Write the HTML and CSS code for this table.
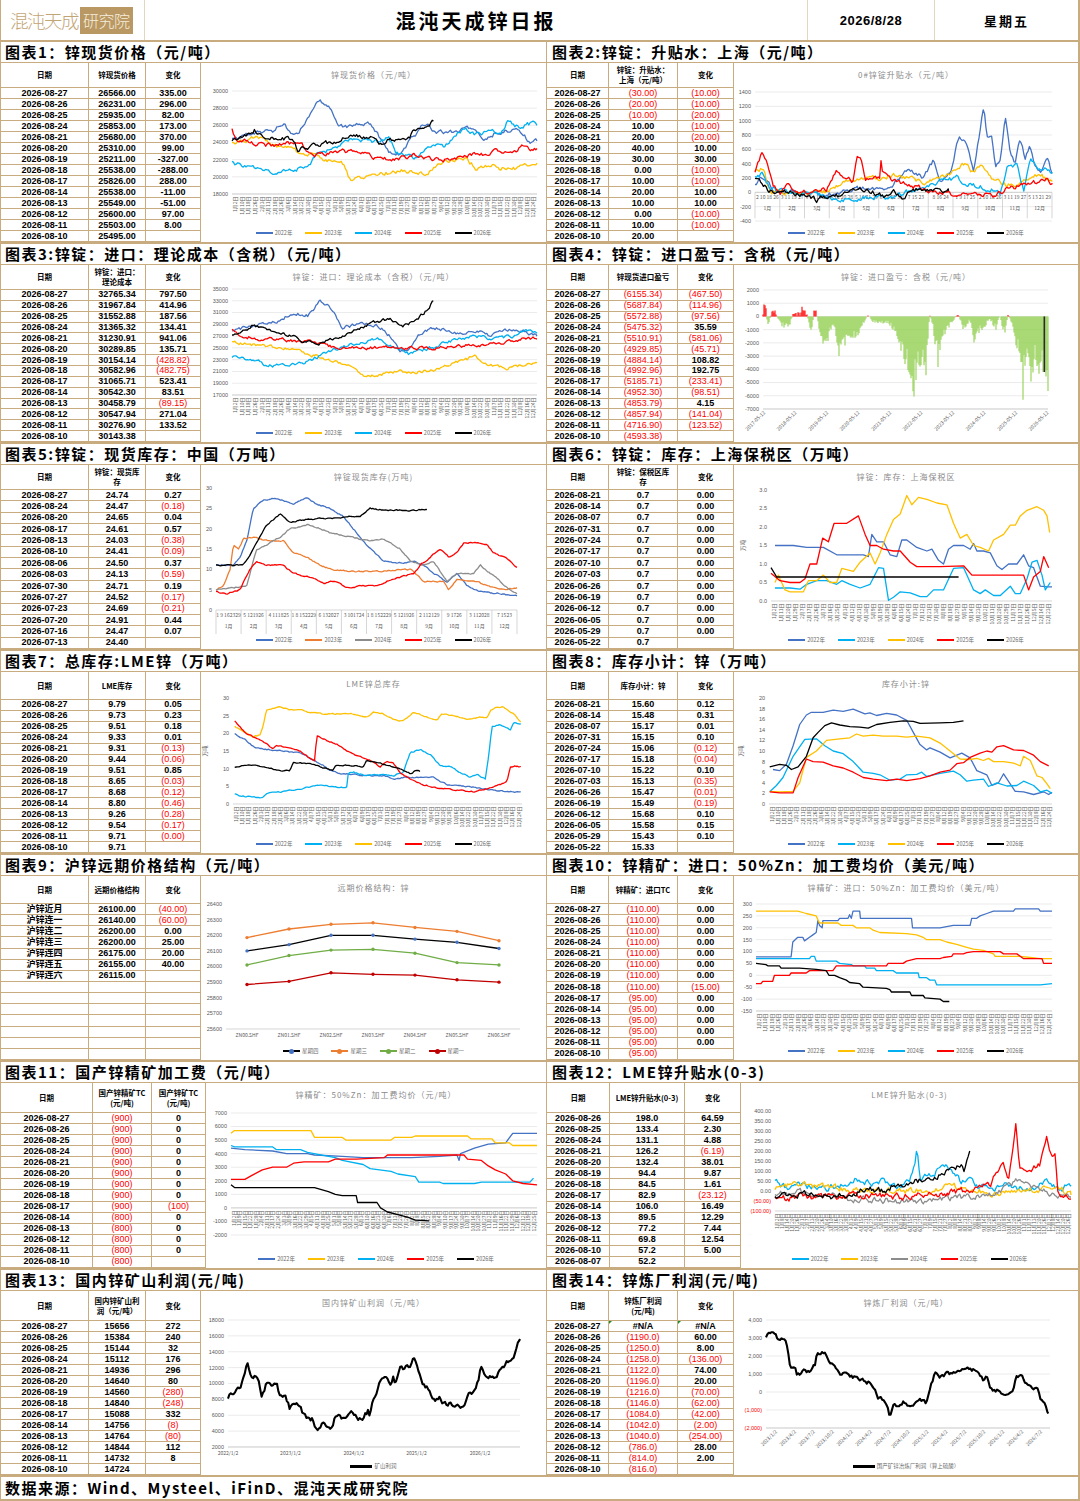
FILE: index.html
```html
<!DOCTYPE html>
<html lang="zh-CN">
<head>
<meta charset="utf-8">
<title>混沌天成锌日报</title>
<link rel="stylesheet" href="styles.css">
</head>
<body>
<div class="page">
  <header class="hdr">
    <div class="logo"><span class="lg-a">混沌天成</span><span class="lg-b">研究院</span></div>
    <div class="htitle">混沌天成锌日报</div>
    <div class="hdate">2026/8/28</div>
    <div class="hday">星期五</div>
  </header>

  <section class="sec s1">
    <div class="panel">
      <h2 class="ttl">图表1：锌现货价格（元/吨）</h2>
      <div class="body">
        <div class="tbl">
          <span class="h">日期</span><span class="h">锌现货价格</span><span class="h">变化</span>
          <span>2026-08-27</span><span>26566.00</span><span>335.00</span>
          <span>2026-08-26</span><span>26231.00</span><span>296.00</span>
          <span>2026-08-25</span><span>25935.00</span><span>82.00</span>
          <span>2026-08-24</span><span>25853.00</span><span>173.00</span>
          <span>2026-08-21</span><span>25680.00</span><span>370.00</span>
          <span>2026-08-20</span><span>25310.00</span><span>99.00</span>
          <span>2026-08-19</span><span>25211.00</span><span>-327.00</span>
          <span>2026-08-18</span><span>25538.00</span><span>-288.00</span>
          <span>2026-08-17</span><span>25826.00</span><span>288.00</span>
          <span>2026-08-14</span><span>25538.00</span><span>-11.00</span>
          <span>2026-08-13</span><span>25549.00</span><span>-51.00</span>
          <span>2026-08-12</span><span>25600.00</span><span>97.00</span>
          <span>2026-08-11</span><span>25503.00</span><span>8.00</span>
          <span>2026-08-10</span><span>25495.00</span><span></span>
        </div>
        <div class="chart" data-c="c1">
          <div class="ctitle">锌现货价格（元/吨）</div>
          <svg class="plot"></svg>
          <div class="legend"><span class="li"><i class="sw blue"></i>2022年</span><span class="li"><i class="sw gold"></i>2023年</span><span class="li"><i class="sw cyan"></i>2024年</span><span class="li"><i class="sw red"></i>2025年</span><span class="li"><i class="sw black"></i>2026年</span></div>
        </div>
      </div>
    </div>
    <div class="panel rp">
      <h2 class="ttl">图表2:锌锭：升贴水：上海（元/吨）</h2>
      <div class="body">
        <div class="tbl">
          <span class="h">日期</span><span class="h">锌锭：升贴水：<br>上海（元/吨）</span><span class="h">变化</span>
          <span>2026-08-27</span><span class="r">(30.00)</span><span class="r">(10.00)</span>
          <span>2026-08-26</span><span class="r">(20.00)</span><span class="r">(10.00)</span>
          <span>2026-08-25</span><span class="r">(10.00)</span><span class="r">(20.00)</span>
          <span>2026-08-24</span><span>10.00</span><span class="r">(10.00)</span>
          <span>2026-08-21</span><span>20.00</span><span class="r">(20.00)</span>
          <span>2026-08-20</span><span>40.00</span><span>10.00</span>
          <span>2026-08-19</span><span>30.00</span><span>30.00</span>
          <span>2026-08-18</span><span>0.00</span><span class="r">(10.00)</span>
          <span>2026-08-17</span><span>10.00</span><span class="r">(10.00)</span>
          <span>2026-08-14</span><span>20.00</span><span>10.00</span>
          <span>2026-08-13</span><span>10.00</span><span>10.00</span>
          <span>2026-08-12</span><span>0.00</span><span class="r">(10.00)</span>
          <span>2026-08-11</span><span>10.00</span><span class="r">(10.00)</span>
          <span>2026-08-10</span><span>20.00</span><span></span>
        </div>
        <div class="chart" data-c="c2">
          <div class="ctitle">0#锌锭升贴水（元/吨）</div>
          <svg class="plot"></svg>
          <div class="legend"><span class="li"><i class="sw blue"></i>2022年</span><span class="li"><i class="sw gold"></i>2023年</span><span class="li"><i class="sw cyan"></i>2024年</span><span class="li"><i class="sw red"></i>2025年</span><span class="li"><i class="sw black"></i>2026年</span></div>
        </div>
      </div>
    </div>
  </section>

  <section class="sec s2">
    <div class="panel">
      <h2 class="ttl">图表3:锌锭：进口：理论成本（含税）（元/吨）</h2>
      <div class="body">
        <div class="tbl">
          <span class="h">日期</span><span class="h">锌锭：进口：<br>理论成本</span><span class="h">变化</span>
          <span>2026-08-27</span><span>32765.34</span><span>797.50</span>
          <span>2026-08-26</span><span>31967.84</span><span>414.96</span>
          <span>2026-08-25</span><span>31552.88</span><span>187.56</span>
          <span>2026-08-24</span><span>31365.32</span><span>134.41</span>
          <span>2026-08-21</span><span>31230.91</span><span>941.06</span>
          <span>2026-08-20</span><span>30289.85</span><span>135.71</span>
          <span>2026-08-19</span><span>30154.14</span><span class="r">(428.82)</span>
          <span>2026-08-18</span><span>30582.96</span><span class="r">(482.75)</span>
          <span>2026-08-17</span><span>31065.71</span><span>523.41</span>
          <span>2026-08-14</span><span>30542.30</span><span>83.51</span>
          <span>2026-08-13</span><span>30458.79</span><span class="r">(89.15)</span>
          <span>2026-08-12</span><span>30547.94</span><span>271.04</span>
          <span>2026-08-11</span><span>30276.90</span><span>133.52</span>
          <span>2026-08-10</span><span>30143.38</span><span></span>
        </div>
        <div class="chart" data-c="c3">
          <div class="ctitle">锌锭：进口：理论成本（含税）（元/吨）</div>
          <svg class="plot"></svg>
          <div class="legend"><span class="li"><i class="sw blue"></i>2022年</span><span class="li"><i class="sw gold"></i>2023年</span><span class="li"><i class="sw cyan"></i>2024年</span><span class="li"><i class="sw red"></i>2025年</span><span class="li"><i class="sw black"></i>2026年</span></div>
        </div>
      </div>
    </div>
    <div class="panel rp">
      <h2 class="ttl">图表4：锌锭：进口盈亏：含税（元/吨）</h2>
      <div class="body">
        <div class="tbl">
          <span class="h">日期</span><span class="h">锌现货进口盈亏</span><span class="h">变化</span>
          <span>2026-08-27</span><span class="r">(6155.34)</span><span class="r">(467.50)</span>
          <span>2026-08-26</span><span class="r">(5687.84)</span><span class="r">(114.96)</span>
          <span>2026-08-25</span><span class="r">(5572.88)</span><span class="r">(97.56)</span>
          <span>2026-08-24</span><span class="r">(5475.32)</span><span>35.59</span>
          <span>2026-08-21</span><span class="r">(5510.91)</span><span class="r">(581.06)</span>
          <span>2026-08-20</span><span class="r">(4929.85)</span><span class="r">(45.71)</span>
          <span>2026-08-19</span><span class="r">(4884.14)</span><span>108.82</span>
          <span>2026-08-18</span><span class="r">(4992.96)</span><span>192.75</span>
          <span>2026-08-17</span><span class="r">(5185.71)</span><span class="r">(233.41)</span>
          <span>2026-08-14</span><span class="r">(4952.30)</span><span class="r">(98.51)</span>
          <span>2026-08-13</span><span class="r">(4853.79)</span><span>4.15</span>
          <span>2026-08-12</span><span class="r">(4857.94)</span><span class="r">(141.04)</span>
          <span>2026-08-11</span><span class="r">(4716.90)</span><span class="r">(123.52)</span>
          <span>2026-08-10</span><span class="r">(4593.38)</span><span></span>
        </div>
        <div class="chart nolg" data-c="c4">
          <div class="ctitle">锌锭：进口盈亏：含税（元/吨）</div>
          <svg class="plot"></svg>
        </div>
      </div>
    </div>
  </section>

  <section class="sec s3">
    <div class="panel">
      <h2 class="ttl">图表5:锌锭：现货库存：中国（万吨）</h2>
      <div class="body">
        <div class="tbl">
          <span class="h">日期</span><span class="h">锌锭：现货库<br>存</span><span class="h">变化</span>
          <span>2026-08-27</span><span>24.74</span><span>0.27</span>
          <span>2026-08-24</span><span>24.47</span><span class="r">(0.18)</span>
          <span>2026-08-20</span><span>24.65</span><span>0.04</span>
          <span>2026-08-17</span><span>24.61</span><span>0.57</span>
          <span>2026-08-13</span><span>24.03</span><span class="r">(0.38)</span>
          <span>2026-08-10</span><span>24.41</span><span class="r">(0.09)</span>
          <span>2026-08-06</span><span>24.50</span><span>0.37</span>
          <span>2026-08-03</span><span>24.13</span><span class="r">(0.59)</span>
          <span>2026-07-30</span><span>24.71</span><span>0.19</span>
          <span>2026-07-27</span><span>24.52</span><span class="r">(0.17)</span>
          <span>2026-07-23</span><span>24.69</span><span class="r">(0.21)</span>
          <span>2026-07-20</span><span>24.91</span><span>0.44</span>
          <span>2026-07-16</span><span>24.47</span><span>0.07</span>
          <span>2026-07-13</span><span>24.40</span><span></span>
        </div>
        <div class="chart" data-c="c5">
          <div class="ctitle">锌锭现货库存(万吨)</div>
          <svg class="plot"></svg>
          <div class="legend"><span class="li"><i class="sw blue"></i>2022年</span><span class="li"><i class="sw orange"></i>2023年</span><span class="li"><i class="sw gray"></i>2024年</span><span class="li"><i class="sw red"></i>2025年</span><span class="li"><i class="sw black"></i>2026年</span></div>
        </div>
      </div>
    </div>
    <div class="panel rp">
      <h2 class="ttl">图表6：锌锭：库存：上海保税区（万吨）</h2>
      <div class="body">
        <div class="tbl">
          <span class="h">日期</span><span class="h">锌锭：保税区库<br>存</span><span class="h">变化</span>
          <span>2026-08-21</span><span>0.7</span><span>0.00</span>
          <span>2026-08-14</span><span>0.7</span><span>0.00</span>
          <span>2026-08-07</span><span>0.7</span><span>0.00</span>
          <span>2026-07-31</span><span>0.7</span><span>0.00</span>
          <span>2026-07-24</span><span>0.7</span><span>0.00</span>
          <span>2026-07-17</span><span>0.7</span><span>0.00</span>
          <span>2026-07-10</span><span>0.7</span><span>0.00</span>
          <span>2026-07-03</span><span>0.7</span><span>0.00</span>
          <span>2026-06-26</span><span>0.7</span><span>0.00</span>
          <span>2026-06-19</span><span>0.7</span><span>0.00</span>
          <span>2026-06-12</span><span>0.7</span><span>0.00</span>
          <span>2026-06-05</span><span>0.7</span><span>0.00</span>
          <span>2026-05-29</span><span>0.7</span><span>0.00</span>
          <span>2026-05-22</span><span>0.7</span><span></span>
        </div>
        <div class="chart" data-c="c6">
          <div class="ctitle">锌锭：库存：上海保税区</div>
          <svg class="plot"></svg>
          <div class="legend"><span class="li"><i class="sw blue"></i>2022年</span><span class="li"><i class="sw cyan"></i>2023年</span><span class="li"><i class="sw gold"></i>2024年</span><span class="li"><i class="sw red"></i>2025年</span><span class="li"><i class="sw black"></i>2026年</span></div>
        </div>
      </div>
    </div>
  </section>

  <section class="sec s4">
    <div class="panel">
      <h2 class="ttl">图表7：总库存:LME锌（万吨）</h2>
      <div class="body">
        <div class="tbl">
          <span class="h">日期</span><span class="h">LME库存</span><span class="h">变化</span>
          <span>2026-08-27</span><span>9.79</span><span>0.05</span>
          <span>2026-08-26</span><span>9.73</span><span>0.23</span>
          <span>2026-08-25</span><span>9.51</span><span>0.18</span>
          <span>2026-08-24</span><span>9.33</span><span>0.01</span>
          <span>2026-08-21</span><span>9.31</span><span class="r">(0.13)</span>
          <span>2026-08-20</span><span>9.44</span><span class="r">(0.06)</span>
          <span>2026-08-19</span><span>9.51</span><span>0.85</span>
          <span>2026-08-18</span><span>8.65</span><span class="r">(0.03)</span>
          <span>2026-08-17</span><span>8.68</span><span class="r">(0.12)</span>
          <span>2026-08-14</span><span>8.80</span><span class="r">(0.46)</span>
          <span>2026-08-13</span><span>9.26</span><span class="r">(0.28)</span>
          <span>2026-08-12</span><span>9.54</span><span class="r">(0.17)</span>
          <span>2026-08-11</span><span>9.71</span><span class="r">(0.00)</span>
          <span>2026-08-10</span><span>9.71</span><span></span>
        </div>
        <div class="chart" data-c="c7">
          <div class="ctitle">LME锌总库存</div>
          <svg class="plot"></svg>
          <div class="legend"><span class="li"><i class="sw blue"></i>2022年</span><span class="li"><i class="sw cyan"></i>2023年</span><span class="li"><i class="sw gold"></i>2024年</span><span class="li"><i class="sw red"></i>2025年</span><span class="li"><i class="sw black"></i>2026年</span></div>
        </div>
      </div>
    </div>
    <div class="panel rp">
      <h2 class="ttl">图表8：库存小计：锌（万吨）</h2>
      <div class="body">
        <div class="tbl">
          <span class="h">日期</span><span class="h">库存小计：锌</span><span class="h">变化</span>
          <span>2026-08-21</span><span>15.60</span><span>0.12</span>
          <span>2026-08-14</span><span>15.48</span><span>0.31</span>
          <span>2026-08-07</span><span>15.17</span><span>0.01</span>
          <span>2026-07-31</span><span>15.15</span><span>0.10</span>
          <span>2026-07-24</span><span>15.06</span><span class="r">(0.12)</span>
          <span>2026-07-17</span><span>15.18</span><span class="r">(0.04)</span>
          <span>2026-07-10</span><span>15.22</span><span>0.10</span>
          <span>2026-07-03</span><span>15.13</span><span class="r">(0.35)</span>
          <span>2026-06-26</span><span>15.47</span><span class="r">(0.01)</span>
          <span>2026-06-19</span><span>15.49</span><span class="r">(0.19)</span>
          <span>2026-06-12</span><span>15.68</span><span>0.10</span>
          <span>2026-06-05</span><span>15.58</span><span>0.15</span>
          <span>2026-05-29</span><span>15.43</span><span>0.10</span>
          <span>2026-05-22</span><span>15.33</span><span></span>
        </div>
        <div class="chart" data-c="c8">
          <div class="ctitle">库存小计:锌</div>
          <svg class="plot"></svg>
          <div class="legend"><span class="li"><i class="sw blue"></i>2022年</span><span class="li"><i class="sw cyan"></i>2023年</span><span class="li"><i class="sw gold"></i>2024年</span><span class="li"><i class="sw red"></i>2025年</span><span class="li"><i class="sw black"></i>2026年</span></div>
        </div>
      </div>
    </div>
  </section>

  <section class="sec s5">
    <div class="panel">
      <h2 class="ttl">图表9：沪锌远期价格结构（元/吨）</h2>
      <div class="body">
        <div class="tbl">
          <span class="h">日期</span><span class="h">远期价格结构</span><span class="h">变化</span>
          <span>沪锌近月</span><span>26100.00</span><span class="r">(40.00)</span>
          <span>沪锌连一</span><span>26140.00</span><span class="r">(60.00)</span>
          <span>沪锌连二</span><span>26200.00</span><span>0.00</span>
          <span>沪锌连三</span><span>26200.00</span><span>25.00</span>
          <span>沪锌连四</span><span>26175.00</span><span>20.00</span>
          <span>沪锌连五</span><span>26155.00</span><span>40.00</span>
          <span>沪锌连六</span><span>26115.00</span><span></span>
          <span></span><span></span><span></span>
          <span></span><span></span><span></span>
          <span></span><span></span><span></span>
          <span></span><span></span><span></span>
          <span></span><span></span><span></span>
          <span></span><span></span><span></span>
          <span></span><span></span><span></span>
        </div>
        <div class="chart" data-c="c9">
          <div class="ctitle">远期价格结构：锌</div>
          <svg class="plot"></svg>
          <div class="legend"><span class="li"><i class="sw black mk m-blue"></i>星期四</span><span class="li"><i class="sw orange mk m-orange"></i>星期三</span><span class="li"><i class="sw green mk m-green"></i>星期二</span><span class="li"><i class="sw dred mk m-dred"></i>星期一</span></div>
        </div>
      </div>
    </div>
    <div class="panel rp">
      <h2 class="ttl">图表10：锌精矿：进口：50%Zn：加工费均价（美元/吨）</h2>
      <div class="body">
        <div class="tbl">
          <span class="h">日期</span><span class="h">锌精矿：进口TC</span><span class="h">变化</span>
          <span>2026-08-27</span><span class="r">(110.00)</span><span>0.00</span>
          <span>2026-08-26</span><span class="r">(110.00)</span><span>0.00</span>
          <span>2026-08-25</span><span class="r">(110.00)</span><span>0.00</span>
          <span>2026-08-24</span><span class="r">(110.00)</span><span>0.00</span>
          <span>2026-08-21</span><span class="r">(110.00)</span><span>0.00</span>
          <span>2026-08-20</span><span class="r">(110.00)</span><span>0.00</span>
          <span>2026-08-19</span><span class="r">(110.00)</span><span>0.00</span>
          <span>2026-08-18</span><span class="r">(110.00)</span><span class="r">(15.00)</span>
          <span>2026-08-17</span><span class="r">(95.00)</span><span>0.00</span>
          <span>2026-08-14</span><span class="r">(95.00)</span><span>0.00</span>
          <span>2026-08-13</span><span class="r">(95.00)</span><span>0.00</span>
          <span>2026-08-12</span><span class="r">(95.00)</span><span>0.00</span>
          <span>2026-08-11</span><span class="r">(95.00)</span><span>0.00</span>
          <span>2026-08-10</span><span class="r">(95.00)</span><span></span>
        </div>
        <div class="chart" data-c="c10">
          <div class="ctitle">锌精矿：进口：50%Zn：加工费均价（美元/吨）</div>
          <svg class="plot"></svg>
          <div class="legend"><span class="li"><i class="sw blue"></i>2022年</span><span class="li"><i class="sw gold"></i>2023年</span><span class="li"><i class="sw cyan"></i>2024年</span><span class="li"><i class="sw red"></i>2025年</span><span class="li"><i class="sw black"></i>2026年</span></div>
        </div>
      </div>
    </div>
  </section>

  <section class="sec s6">
    <div class="panel">
      <h2 class="ttl">图表11：国产锌精矿加工费（元/吨）</h2>
      <div class="body">
        <div class="tbl">
          <span class="h">日期</span><span class="h">国产锌精矿TC<br>(元/吨)</span><span class="h">国产锌矿TC<br>(元/吨)</span>
          <span>2026-08-27</span><span class="r">(900)</span><span>0</span>
          <span>2026-08-26</span><span class="r">(900)</span><span>0</span>
          <span>2026-08-25</span><span class="r">(900)</span><span>0</span>
          <span>2026-08-24</span><span class="r">(900)</span><span>0</span>
          <span>2026-08-21</span><span class="r">(900)</span><span>0</span>
          <span>2026-08-20</span><span class="r">(900)</span><span>0</span>
          <span>2026-08-19</span><span class="r">(900)</span><span>0</span>
          <span>2026-08-18</span><span class="r">(900)</span><span>0</span>
          <span>2026-08-17</span><span class="r">(900)</span><span class="r">(100)</span>
          <span>2026-08-14</span><span class="r">(800)</span><span>0</span>
          <span>2026-08-13</span><span class="r">(800)</span><span>0</span>
          <span>2026-08-12</span><span class="r">(800)</span><span>0</span>
          <span>2026-08-11</span><span class="r">(800)</span><span>0</span>
          <span>2026-08-10</span><span class="r">(800)</span><span></span>
        </div>
        <div class="chart" data-c="c11">
          <div class="ctitle">锌精矿：50%Zn：加工费均价（元/吨）</div>
          <svg class="plot"></svg>
          <div class="legend"><span class="li"><i class="sw blue"></i>2022年</span><span class="li"><i class="sw gold"></i>2023年</span><span class="li"><i class="sw cyan"></i>2024年</span><span class="li"><i class="sw red"></i>2025年</span><span class="li"><i class="sw black"></i>2026年</span></div>
        </div>
      </div>
    </div>
    <div class="panel rp">
      <h2 class="ttl">图表12：LME锌升贴水(0-3)</h2>
      <div class="body">
        <div class="tbl">
          <span class="h">日期</span><span class="h">LME锌升贴水(0-3)</span><span class="h">变化</span>
          <span>2026-08-26</span><span>198.0</span><span>64.59</span>
          <span>2026-08-25</span><span>133.4</span><span>2.30</span>
          <span>2026-08-24</span><span>131.1</span><span>4.88</span>
          <span>2026-08-21</span><span>126.2</span><span class="r">(6.19)</span>
          <span>2026-08-20</span><span>132.4</span><span>38.01</span>
          <span>2026-08-19</span><span>94.4</span><span>9.87</span>
          <span>2026-08-18</span><span>84.5</span><span>1.61</span>
          <span>2026-08-17</span><span>82.9</span><span class="r">(23.12)</span>
          <span>2026-08-14</span><span>106.0</span><span>16.49</span>
          <span>2026-08-13</span><span>89.5</span><span>12.29</span>
          <span>2026-08-12</span><span>77.2</span><span>7.44</span>
          <span>2026-08-11</span><span>69.8</span><span>12.54</span>
          <span>2026-08-10</span><span>57.2</span><span>5.00</span>
          <span>2026-08-07</span><span>52.2</span><span></span>
        </div>
        <div class="chart" data-c="c12">
          <div class="ctitle">LME锌升贴水(0-3)</div>
          <svg class="plot"></svg>
          <div class="legend"><span class="li"><i class="sw cyan"></i>2022年</span><span class="li"><i class="sw gold"></i>2023年</span><span class="li"><i class="sw gray"></i>2024年</span><span class="li"><i class="sw red"></i>2025年</span><span class="li"><i class="sw black"></i>2026年</span></div>
        </div>
      </div>
    </div>
  </section>

  <section class="sec s7">
    <div class="panel">
      <h2 class="ttl">图表13：国内锌矿山利润(元/吨)</h2>
      <div class="body">
        <div class="tbl">
          <span class="h">日期</span><span class="h">国内锌矿山利<br>润（元/吨）</span><span class="h">变化</span>
          <span>2026-08-27</span><span>15656</span><span>272</span>
          <span>2026-08-26</span><span>15384</span><span>240</span>
          <span>2026-08-25</span><span>15144</span><span>32</span>
          <span>2026-08-24</span><span>15112</span><span>176</span>
          <span>2026-08-21</span><span>14936</span><span>296</span>
          <span>2026-08-20</span><span>14640</span><span>80</span>
          <span>2026-08-19</span><span>14560</span><span class="r">(280)</span>
          <span>2026-08-18</span><span>14840</span><span class="r">(248)</span>
          <span>2026-08-17</span><span>15088</span><span>332</span>
          <span>2026-08-14</span><span>14756</span><span class="r">(8)</span>
          <span>2026-08-13</span><span>14764</span><span class="r">(80)</span>
          <span>2026-08-12</span><span>14844</span><span>112</span>
          <span>2026-08-11</span><span>14732</span><span>8</span>
          <span>2026-08-10</span><span>14724</span><span></span>
        </div>
        <div class="chart" data-c="c13">
          <div class="ctitle">国内锌矿山利润（元/吨）</div>
          <svg class="plot"></svg>
          <div class="legend"><span class="li"><i class="sw black thick"></i>矿山利润</span></div>
        </div>
      </div>
    </div>
    <div class="panel rp">
      <h2 class="ttl">图表14：锌炼厂利润(元/吨)</h2>
      <div class="body">
        <div class="tbl">
          <span class="h">日期</span><span class="h">锌炼厂利润<br>(元/吨)</span><span class="h">变化</span>
          <span>2026-08-27</span><span class="err">#N/A</span><span class="err">#N/A</span>
          <span>2026-08-26</span><span class="r">(1190.0)</span><span>60.00</span>
          <span>2026-08-25</span><span class="r">(1250.0)</span><span>8.00</span>
          <span>2026-08-24</span><span class="r">(1258.0)</span><span class="r">(136.00)</span>
          <span>2026-08-21</span><span class="r">(1122.0)</span><span>74.00</span>
          <span>2026-08-20</span><span class="r">(1196.0)</span><span>20.00</span>
          <span>2026-08-19</span><span class="r">(1216.0)</span><span class="r">(70.00)</span>
          <span>2026-08-18</span><span class="r">(1146.0)</span><span class="r">(62.00)</span>
          <span>2026-08-17</span><span class="r">(1084.0)</span><span class="r">(42.00)</span>
          <span>2026-08-14</span><span class="r">(1042.0)</span><span class="r">(2.00)</span>
          <span>2026-08-13</span><span class="r">(1040.0)</span><span class="r">(254.00)</span>
          <span>2026-08-12</span><span class="r">(786.0)</span><span>28.00</span>
          <span>2026-08-11</span><span class="r">(814.0)</span><span>2.00</span>
          <span>2026-08-10</span><span class="r">(816.0)</span><span></span>
        </div>
        <div class="chart" data-c="c14">
          <div class="ctitle">锌炼厂利润（元/吨）</div>
          <svg class="plot"></svg>
          <div class="legend"><span class="li"><i class="sw black thick"></i>国产矿锌冶炼厂利润（算上硫酸）</span></div>
        </div>
      </div>
    </div>
  </section>

  <footer class="foot">数据来源：Wind、Mysteel、iFinD、混沌天成研究院</footer>
</div>
<script src="charts.js"></script>
</body>
</html>
```

FILE: styles.css
```css
:root {
  --tan: #c8ac7f;
}
* { box-sizing: border-box; }
html, body { margin: 0; padding: 0; background: #fff; }
body {
  font-family: "Liberation Sans", "Noto Sans CJK SC", sans-serif;
  color: #000;
}
.page {
  width: 1080px;
  border-left: 1px solid var(--tan);
  border-right: 2px solid var(--tan);
}

/* header */
.hdr {
  display: grid;
  grid-template-columns: 144px 663px 127px 1fr;
  height: 42px;
  border-bottom: 2px solid var(--tan);
}
.hdr > div {
  display: flex;
  align-items: center;
  justify-content: center;
  border-right: 1px solid #e2d6c0;
}
.hdr > div:last-child { border-right: none; }
.hdr > .logo { justify-content: flex-start; padding-left: 9px; gap: 2px; }
.lg-a {
  font-family: "Noto Sans CJK SC", sans-serif;
  font-weight: 300;
  font-size: 18.5px;
  letter-spacing: -1.5px;
  color: #c2a576;
}
.lg-b {
  font-family: "Noto Sans CJK SC", sans-serif;
  font-weight: 300;
  font-size: 16px;
  line-height: 27px;
  height: 27px;
  padding: 0 3px;
  background: #b99864;
  color: #f7eedc;
  letter-spacing: -0.5px;
}
.htitle {
  font-family: "Noto Sans CJK SC", sans-serif;
  font-weight: 700;
  font-size: 20px;
  letter-spacing: 3px;
}
.hdate { font-weight: 700; font-size: 13px; letter-spacing: 0.5px; }
.hday { font-family: "Noto Sans CJK SC", sans-serif; font-weight: 700; font-size: 13px; letter-spacing: 2px; }

/* sections */
.sec {
  display: grid;
  grid-template-columns: 545px 1fr;
  border-bottom: 2px solid var(--tan);
}
.s1 { height: 202px; }
.s2 { height: 200px; }
.s3 { height: 207px; }
.s4 { height: 204px; }
.s5 { height: 207px; }
.s6 { height: 208px; }
.s7 { height: 207px; }

.panel { display: flex; flex-direction: column; min-width: 0; min-height: 0; }
.rp { border-left: 1px solid var(--tan); }
.ttl {
  margin: 0;
  height: 21px;
  flex: none;
  border-bottom: 1px solid var(--tan);
  font-family: "Noto Sans CJK SC", sans-serif;
  font-weight: 700;
  font-size: 15px;
  line-height: 20px;
  letter-spacing: 1.5px;
  padding-left: 4px;
  white-space: nowrap;
  overflow: hidden;
}
.rp .ttl { padding-left: 5px; }
.body { flex: 1; display: flex; min-height: 0; }

/* tables */
.tbl {
  flex: none;
  display: grid;
  grid-template-columns: 88px 57px 54px;
  grid-template-rows: var(--hh) repeat(14, 1fr);
}
.rp .tbl { grid-template-columns: 62px 69px 55px; }
.s6 .tbl { grid-template-columns: 92px 59px 53px; }
.s6 .rp .tbl { grid-template-columns: 63px 75px 55px; }
.s1, .s2, .s3 { --hh: 25px; }
.s4, .s5 { --hh: 28px; }
.s6, .s7 { --hh: 30px; }

.tbl > span {
  display: flex;
  align-items: center;
  justify-content: center;
  border-right: 1px solid var(--tan);
  border-bottom: 1px solid var(--tan);
  font-weight: 700;
  font-size: 9px;
  line-height: 1;
  white-space: nowrap;
  overflow: hidden;
  min-height: 0;
}
.tbl > span:nth-child(3n) { border-right: none; }
.tbl > span.h {
  font-family: "Noto Sans CJK SC", sans-serif;
  font-size: 7.5px;
  line-height: 1.3;
  text-align: center;
  white-space: normal;
  padding: 0 2px;
}
.tbl > span.r { color: #ff0000; font-weight: 400; }
.tbl > span.err { position: relative; }
.tbl > span.err::before {
  content: "";
  position: absolute;
  left: 0;
  top: 0;
  border-top: 3px solid #1c8c2c;
  border-right: 3px solid transparent;
}

/* charts */
.chart {
  flex: 1;
  min-width: 0;
  display: flex;
  flex-direction: column;
  border-left: 1px solid var(--tan);
}
.ctitle {
  flex: none;
  height: 22px;
  display: flex;
  align-items: center;
  justify-content: center;
  font-family: "Noto Sans CJK SC", sans-serif;
  font-size: 8px;
  letter-spacing: 1px;
  color: #8a8a8a;
  white-space: nowrap;
}
.plot {
  flex: 1 1 0;
  min-height: 0;
  width: 100%;
  display: block;
  overflow: visible;
}
.legend {
  flex: none;
  height: 14px;
  margin-bottom: 2px;
  display: flex;
  align-items: center;
  justify-content: center;
  gap: 13px;
}
.li {
  display: inline-flex;
  align-items: center;
  font-family: "Noto Sans CJK SC", sans-serif;
  font-size: 5.5px;
  color: #6b6b6b;
  white-space: nowrap;
}
.sw {
  display: inline-block;
  width: 17px;
  height: 2px;
  margin-right: 2px;
}
.sw.thick { height: 3px; width: 22px; }
.sw.mk { position: relative; }
.sw.mk::after {
  content: "";
  position: absolute;
  left: 6px;
  top: -1.5px;
  width: 5px;
  height: 5px;
  border-radius: 50%;
}
.blue { background: #4472c4; }
.gold { background: #ffc000; }
.cyan { background: #00b0f0; }
.red { background: #ff0000; }
.black { background: #000; }
.orange { background: #ed7d31; }
.gray { background: #8c8c8c; }
.green { background: #70ad47; }
.dred { background: #c00000; }
.m-blue::after { background: #4472c4; }
.m-orange::after { background: #ed7d31; }
.m-green::after { background: #70ad47; }
.m-dred::after { background: #c00000; }

/* svg text */
.yl { font-family: "Liberation Sans", sans-serif; font-size: 5.5px; fill: #595959; text-anchor: end; }
.yl.neg { fill: #ff0000; }
.xl { font-family: "Noto Sans CJK SC", sans-serif; font-size: 5px; fill: #595959; text-anchor: end; }
.xc { font-family: "Noto Sans CJK SC", sans-serif; font-size: 5px; fill: #595959; text-anchor: middle; }
.unit { font-family: "Noto Sans CJK SC", sans-serif; font-size: 5.5px; fill: #595959; text-anchor: middle; }
.gl { stroke: #dedede; stroke-width: 0.6; }
.ax { stroke: #c4c4c4; stroke-width: 0.7; }

/* footer */
.foot {
  height: 24px;
  border-bottom: 2px solid var(--tan);
  font-family: "Noto Sans CJK SC", sans-serif;
  font-weight: 700;
  font-size: 15px;
  line-height: 22px;
  letter-spacing: 1.5px;
  padding-left: 4px;
}
```

FILE: charts.js
```js
(function () {
  var NS = 'http://www.w3.org/2000/svg';
  var COL = { blue: '#4472c4', gold: '#ffc000', cyan: '#00b0f0', red: '#ff0000', black: '#000000', orange: '#ed7d31', gray: '#8c8c8c', green: '#70ad47', dred: '#c00000' };

  function el(p, t, a, txt) {
    var e = document.createElementNS(NS, t);
    for (var k in a) e.setAttribute(k, a[k]);
    if (txt != null) e.textContent = txt;
    p.appendChild(e);
    return e;
  }
  function rng(seed) {
    return function () {
      seed = (seed + 0x6D2B79F5) | 0;
      var t = Math.imul(seed ^ (seed >>> 15), 1 | seed);
      t = (t + Math.imul(t ^ (t >>> 7), 61 | t)) ^ t;
      return ((t ^ (t >>> 14)) >>> 0) / 4294967296;
    };
  }
  function lerp(kp, z) {
    var n = kp.length;
    if (z <= kp[0]) return kp[1];
    for (var i = 2; i < n; i += 2) {
      if (z <= kp[i]) {
        var za = kp[i - 2], va = kp[i - 1], zb = kp[i], vb = kp[i + 1];
        return zb === za ? vb : va + (vb - va) * (z - za) / (zb - za);
      }
    }
    return kp[n - 1];
  }
  function fmt(v, f) {
    if (f === 'd1') return v.toFixed(1);
    if (f === 'p2') return v < 0 ? '(' + (-v).toFixed(2) + ')' : v.toFixed(2);
    if (f === 'pc') {
      var s = Math.abs(Math.round(v)).toString().replace(/\B(?=(\d{3})+(?!\d))/g, ',');
      return v < 0 ? '(' + s + ')' : s;
    }
    return String(Math.round(v));
  }

  var S = {};
  S.c1 = { y: [18000, 30000, 2000], p: [31, 9, 6, 32], zx: [680, 1555], grid: 1, xa: 'rot', n: 46, amp: 450, s: [
    ['blue', [680,24300,700,24600,730,25000,760,25300,800,25400,830,26500,845,25200,870,25000,900,27000,930,28800,960,28000,990,26000,1000,25800,1050,26300,1080,26000,1100,24800,1130,23000,1160,22500,1200,24700,1230,26100,1260,25400,1300,25000,1330,25500,1350,25800,1400,24500,1450,25300,1500,25300,1540,24000,1555,24200]],
    ['gold', [680,23800,720,24300,760,24500,800,23500,850,23300,880,22700,920,22500,950,22000,1000,21500,1020,19600,1050,19800,1080,20500,1130,20500,1180,20700,1230,20300,1280,21500,1320,22000,1350,22200,1380,21000,1420,21500,1450,21000,1480,20800,1520,21300,1555,21600]],
    ['cyan', [680,21600,720,21200,760,20700,800,20500,860,20800,900,21200,920,22500,950,23000,990,23500,1030,24500,1060,24300,1100,24000,1130,24500,1150,23000,1170,22500,1200,22200,1230,23000,1260,24000,1290,23500,1320,25000,1350,25500,1380,25000,1420,25300,1450,25000,1470,26500,1500,25800,1540,26200,1555,26000]],
    ['red', [680,25800,690,24500,720,24200,760,23800,800,23600,850,24000,880,23700,910,22500,950,22800,1000,22900,1050,22800,1100,22200,1150,22000,1200,22500,1250,22200,1300,22000,1350,22500,1400,22700,1450,23000,1500,23200,1520,23700,1530,23200,1555,23300]],
    ['black', [680,24100,700,24300,720,24800,745,25500,760,25000,800,24500,850,24400,870,23000,880,23400,920,23700,950,23900,970,24000,1000,24500,1050,24800,1080,24600,1100,23800,1130,24300,1160,24500,1190,24700,1210,25700,1240,25700,1258,26500]]
  ] };
  S.c2 = { y: [-400, 1400, 200], p: [21, 26, 7, 5], zx: [645, 1535], grid: 1, ax0: 1, xa: 'two', sep: 26,
    days: ['2 10 18 26', '3 11 19 27', '3 11 19 27', '4 12 20 28', '5 13 21 29', '6 14 22 30', '7 15 23', '8 16 24', '1 9 17 25', '2 10 18 26', '3 11 19 27', '5 13 21 29'],
    amp: 60, s: [
    ['blue', [645,100,660,200,690,100,700,0,750,30,800,0,850,-50,900,0,950,50,1000,50,1050,50,1100,300,1130,250,1150,200,1180,450,1200,200,1230,300,1255,750,1280,700,1300,250,1330,1200,1340,800,1355,800,1365,350,1380,400,1395,1100,1410,500,1425,400,1440,750,1455,450,1468,650,1480,400,1500,300,1520,500,1535,280]],
    ['gold', [645,300,670,350,690,0,750,0,850,0,880,50,900,100,950,200,1000,200,1020,150,1050,250,1100,200,1150,150,1200,200,1240,300,1275,400,1300,250,1325,400,1350,200,1400,100,1450,150,1500,250,1535,150]],
    ['cyan', [645,200,665,250,690,50,750,0,800,0,850,-50,900,-100,950,-100,1000,-50,1050,-100,1100,0,1150,50,1200,150,1250,200,1270,100,1300,100,1350,50,1380,0,1400,350,1430,380,1450,0,1470,500,1490,350,1510,350,1535,280]],
    ['red', [645,300,665,550,680,450,700,100,720,0,740,80,760,50,820,0,860,50,890,300,910,200,940,150,950,520,965,450,975,200,1000,200,1019,200,1020,620,1025,300,1050,200,1100,100,1150,50,1200,0,1250,-30,1300,-50,1330,-20,1360,-50,1400,50,1450,100,1500,150,1520,200,1535,130]],
    ['black', [645,200,660,150,680,50,700,0,730,50,760,0,800,-50,830,-120,850,-50,900,-50,940,50,970,30,1000,0,1030,-50,1060,0,1090,-100,1110,0,1140,50,1170,30,1200,0,1225,20]]
  ] };
  S.c3 = { y: [17000, 35000, 2000], p: [31, 9, 2, 31], zx: [0, 100], grid: 1, xa: 'rot', n: 46, amp: 500, s: [
    ['blue', [0,28000,5,28500,10,29000,15,29500,20,31000,25,30500,29,33000,33,31500,36,28500,42,29000,48,28800,52,27000,55,24500,58,25000,62,27500,66,28500,70,28000,75,27500,80,28000,85,27000,90,28000,95,28000,100,27000]],
    ['gold', [0,26000,8,25500,15,25000,22,24500,28,23500,34,22500,40,21500,44,20000,48,20500,55,21000,62,21000,68,21500,74,22500,80,23500,84,22000,90,21500,95,22000,100,22500]],
    ['cyan', [0,23500,6,23000,12,22000,18,22000,24,22500,30,24000,36,25000,42,26000,48,26500,54,25000,58,24000,62,24500,68,25500,74,26500,80,27000,86,26500,92,27000,96,28000,100,27500]],
    ['red', [0,28000,3,27000,10,26500,18,26300,25,26000,30,25500,36,25000,44,25000,50,25200,58,25000,66,25000,74,25300,80,25500,86,25700,92,26200,97,26700,100,26500]],
    ['black', [0,27000,4,28000,7,29000,12,28000,20,27000,24,26000,28,25500,32,26500,36,27000,42,28500,48,29500,52,30000,56,28500,59,29500,62,30500,64,31500,66,33000]]
  ] };
  S.c4 = { y: [-7000, 2000, 1000], p: [29, 30, 3, 33], zx: [670, 1525], grid: 1, xa: 'r45',
    xl: ['2017-05-12', '2018-05-12', '2019-05-12', '2020-05-12', '2021-05-12', '2022-05-12', '2023-05-12', '2024-05-12', '2025-05-12', '2026-05-12'],
    xz: [672, 766, 861, 955, 1050, 1144, 1239, 1333, 1428, 1522],
    bars: [670,500,678,1200,684,-1000,700,800,710,200,720,-500,735,-1000,750,-700,760,200,780,300,790,800,800,500,815,-1500,825,1000,835,-500,850,-2300,870,-1500,885,-700,900,-3200,910,-2000,930,-1800,950,-1500,970,-600,985,100,1000,-400,1050,-600,1075,-1500,1090,-3000,1110,-4000,1125,-5800,1135,-4500,1150,-3000,1160,-4300,1170,200,1180,-1000,1195,-3500,1210,-1500,1230,-800,1255,300,1270,-1000,1290,-300,1305,-2200,1320,-1000,1335,-800,1350,-200,1370,-1000,1380,100,1395,-1500,1405,300,1420,-1000,1440,-3000,1448,-6300,1460,-3000,1475,-4500,1490,-3500,1505,-4500,1515,-4200,1520,-5000,1525,-6100] };
  S.c5 = { y: [0, 30, 5], p: [15, 29, 1, 23], zx: [648, 1550], xa: 'two', sep: 24,
    days: ['1 9 162329', '5 121926', '4 111825', '1 8 152229', '6 132027', '3 101724', '1 8 152229', '5 121926', '2 112129', '9 1726', '3 112028', '7 1523'],
    amp: 0.3, s: [
    ['blue', [648,11,700,11,720,13,740,17,760,25,790,27,820,27.5,850,27,880,26,920,27.5,950,26,990,25,1030,23,1060,20,1100,16,1150,12,1200,11.5,1240,12,1270,11,1300,9,1340,7,1370,9,1400,6,1420,5,1450,4.5,1500,4,1550,3.5]],
    ['orange', [648,5,670,6,690,10,700,16,715,15,730,17.5,760,18,800,17,850,17,880,14,920,13,960,11,1000,10,1050,9.5,1100,9.5,1150,9.5,1200,10,1230,10,1270,7,1300,7,1330,7,1345,5,1370,7.5,1400,7,1430,7,1460,6,1500,5,1550,5.5]],
    ['gray', [648,5,700,5.5,740,6,770,15,800,16,840,18,870,20,920,21,960,20,990,19,1050,18,1100,17,1150,17.5,1200,15,1230,12,1270,11,1300,12,1340,7,1370,9,1420,9,1440,11,1470,9,1500,7,1530,5,1550,4]],
    ['red', [648,4.5,680,4,720,5,750,10,770,12,800,11,850,11,880,9,930,8,970,6.5,1000,7,1040,5.5,1080,6,1130,6,1170,7.5,1200,8,1240,9,1260,11,1290,13,1320,15,1345,13,1370,14,1390,16.5,1430,16.5,1460,16,1480,14,1510,13,1530,12,1550,10.5]],
    ['black', [648,11,700,11,730,11,760,15,800,21,840,23.5,870,21.5,900,22,950,22.5,1000,22.5,1050,23,1080,23,1110,25,1160,24.5,1200,24.5,1240,24.5,1280,24.7]]
  ] };
  S.c6 = { y: [0, 3, 0.5], f: 'd1', p: [37, 26, 3, 32], zx: [693, 1535], xa: 'rot', n: 40, unit: '万吨', s: [
    ['blue', [705,1.5,760,1.5,800,1.45,850,1.45,890,1.25,930,1.25,970,1.25,985,1.2,995,1.8,1010,1.6,1030,1.6,1050,1.25,1070,1.2,1085,1.65,1100,1.65,1130,1.45,1160,1.35,1175,1.4,1195,1.1,1210,1.0,1225,1.4,1240,1.5,1270,1.5,1290,1.4,1300,1.55,1310,1.35,1330,1.35,1350,1.3,1370,0.95,1385,0.85,1405,1.0,1430,1.0,1450,1.25,1465,0.95,1480,0.9,1500,0.4,1520,0.38,1535,0.38]],
    ['cyan', [705,0.35,750,0.35,780,0.32,800,0.45,830,0.55,860,0.55,890,0.45,905,0.55,930,0.45,960,0.35,990,0.45,1015,0.9,1030,0.88,1045,0.02,1060,0.1,1080,0.25,1110,0.22,1140,0.12,1160,0.12,1180,0.3,1210,0.3,1240,0.88,1270,0.9,1300,0.3,1320,0.2,1335,0.3,1360,0.15,1380,0.15,1410,0.4,1425,0.2,1440,0.2,1460,0.6,1475,1.05,1490,1.1,1505,0.7,1515,0.3,1530,0.5]],
    ['gold', [705,0.5,715,0.7,735,0.3,750,0.25,790,0.25,805,0.55,830,0.55,850,0.7,870,0.5,890,0.5,905,0.88,940,0.8,960,1.05,990,1.3,1005,1.0,1020,1.3,1040,1.8,1060,2.2,1080,2.35,1100,2.85,1115,2.6,1135,2.8,1160,2.75,1190,2.65,1220,2.6,1240,2.1,1260,1.7,1280,1.8,1300,1.5,1320,1.45,1345,1.35,1360,1.65,1390,1.8,1410,2.05,1425,2.05,1440,2.3,1460,2.45,1490,2.55,1510,2.45,1520,2.3,1528,1.85]],
    ['red', [693,0.75,720,0.55,750,0.5,780,0.5,795,0.6,810,1.0,830,1.0,848,1.7,865,1.6,882,2.1,920,2.1,955,2.3,975,1.8,990,1.5,1010,1.5,1030,1.4,1060,1.35,1080,1.35,1110,1.05,1130,0.93,1200,0.93,1270,0.95,1295,0.7,1360,0.7,1450,0.7,1465,0.3,1480,0.65,1500,0.8,1510,1.2,1525,0.9]],
    ['black', [693,0.9,710,0.65,1255,0.65]]
  ] };
  S.c7 = { y: [0, 30, 5], p: [32, 24, 4, 33], zx: [700, 1565], xa: 'rot', n: 46, unit: '万吨', amp: 0.3, s: [
    ['blue', [705,20,740,18,765,16,800,15.5,850,15,900,14.5,920,13.5,970,11,990,9.5,1020,8.5,1060,8.5,1100,8,1150,8,1180,7,1210,7.5,1300,7.5,1340,5.5,1400,5,1450,4.3,1500,3.7,1560,3.3]],
    ['cyan', [705,3,720,2.3,760,2,790,1.8,800,3,850,3.5,900,4.3,950,5.2,980,5.2,1040,4.5,1045,8.5,1060,9,1100,8,1150,8.5,1180,8,1210,9,1230,14.5,1260,15.5,1290,14,1320,11,1350,10.5,1390,8.5,1410,7.5,1430,8.5,1455,7,1465,13.5,1475,22,1500,22.5,1530,21,1540,23,1560,22.5]],
    ['gold', [705,22,730,20.5,760,19,780,19.5,790,22,800,26.5,840,27.5,880,26.5,900,27,920,26,970,25.5,1020,25.5,1060,25.5,1100,24.5,1120,26,1150,25.5,1180,24,1210,23.5,1240,26,1270,25,1310,23.5,1325,25.5,1360,25,1400,24,1440,24.5,1460,24.5,1470,26.5,1490,27.5,1510,27.5,1540,25.5,1560,23.5]],
    ['red', [705,23.5,740,20,770,18.5,800,17,820,15.5,830,16.5,870,16,900,15,930,13,945,12,950,19.5,980,18,1010,17,1040,15,1060,14,1090,13,1120,12,1140,10.5,1160,12,1180,11.5,1200,9,1230,7,1270,5.5,1320,4.5,1380,3.8,1420,3.5,1460,4.3,1500,5.5,1520,6.5,1530,10.5,1545,10.7,1560,10.5]],
    ['black', [705,10.5,740,11,760,11,800,10.2,840,9.5,870,9.5,880,11.7,920,11.4,950,11,960,10.5,1000,9.5,1005,11,1050,11,1090,10.5,1100,12.3,1140,11.5,1180,10.5,1210,9.5,1235,8.5,1245,9.5,1260,9.3]]
  ] };
  S.c8 = { y: [0, 20, 2], p: [35, 26, 4, 33], zx: [688, 1535], xa: 'rot', n: 46, unit: '万吨', s: [
    ['blue', [700,6.5,720,6.3,740,7.5,760,11,780,15,800,16.8,815,17.3,850,17.3,880,17.7,910,17.5,940,17.9,975,17,990,17.2,1010,16.7,1040,17.1,1070,16.8,1100,15.8,1120,13.5,1140,11.2,1160,10.2,1170,10.6,1200,9.8,1230,8.7,1265,9.6,1290,8.7,1310,6.3,1340,5.5,1355,3.5,1375,4,1390,5.7,1410,3.8,1425,2.4,1450,2.3,1480,1.8,1510,2.3,1525,1.8,1535,2.2]],
    ['cyan', [690,2.3,710,3.5,730,5,760,9,795,12.2,830,12.3,855,11,880,10,910,9.5,940,8,970,6,1000,5.8,1020,5.5,1050,4.5,1080,4.7,1100,5.5,1130,5.6,1145,6,1160,5.2,1200,5.8,1240,6.2,1260,5.5,1280,4.3,1300,4.5,1330,4.7,1345,3.3,1370,4,1400,3.4,1430,3.5,1450,4.3,1480,3.5,1500,2.3,1520,2.6,1535,2.0]],
    ['gold', [690,2.4,720,2.3,760,2.4,780,4,800,8.8,830,10,860,12,900,12.3,930,12.5,950,13.2,970,12.8,1000,13,1030,12.8,1070,12.8,1100,12.6,1130,12.8,1170,12.5,1200,11.5,1230,10,1260,8.5,1290,8.4,1310,8.6,1330,8.2,1345,8.6,1360,8,1390,8,1420,7.7,1440,7.2,1450,9,1470,8.2,1490,5.3,1505,5,1520,3.8,1530,2.9]],
    ['red', [690,2.3,720,2.1,760,2.1,775,5,800,8.5,820,8,850,7.9,880,7.2,910,6.8,940,6,970,5,1000,4.7,1040,4.4,1070,4.7,1100,4.4,1140,4.8,1170,5.3,1200,6,1230,6.4,1250,7.6,1270,7.8,1290,8.8,1320,9.6,1340,10,1355,9.8,1370,10.8,1390,11,1420,10.2,1450,10.1,1480,9.2,1500,8,1525,7.2]],
    ['black', [690,7,720,7.5,740,7.3,755,6.5,775,7,800,9,820,12.5,835,13.5,855,14.8,875,15.3,900,14.9,930,14.6,960,14.5,985,14.3,1010,15,1050,15.4,1090,15.7,1120,15.6,1140,15.2,1200,15.3,1240,15.4,1270,15.7]]
  ] };
  S.c9 = { y: [25600, 26400, 100], p: [25, 26, 6, 15], zx: [-0.5, 6.5], xa: 'cat', mk: 1,
    cats: ['ZN00.SHF', 'ZN01.SHF', 'ZN02.SHF', 'ZN03.SHF', 'ZN04.SHF', 'ZN05.SHF', 'ZN06.SHF'], s: [
    ['black', [0,26100,1,26140,2,26200,3,26200,4,26175,5,26155,6,26115], 0, 'blue'],
    ['orange', [0,26185,1,26240,2,26270,3,26280,4,26250,5,26225,6,26165], 0, 'orange'],
    ['green', [0,26010,1,26070,2,26105,3,26110,4,26085,5,26025,6,26010], 0, 'green'],
    ['dred', [0,25885,1,25905,2,25960,3,25950,4,25945,5,25915,6,25900], 0, 'dred']
  ] };
  S.c10 = { y: [-150, 300, 50], p: [22, 26, 6, 33], zx: [650, 1535], grid: 1, xa: 'rot', n: 46, s: [
    ['blue', [650,78,755,78,760,140,775,160,790,160,795,145,810,160,820,170,830,180,835,230,840,210,848,200,850,230,895,230,900,240,925,240,930,255,935,240,940,270,960,270,962,240,1115,240,1118,200,1200,200,1240,210,1290,210,1295,240,1310,240,1320,250,1340,260,1360,270,1420,270,1425,280,1495,280,1500,270,1535,270]],
    ['gold', [650,270,775,270,800,260,830,250,840,220,895,220,905,210,940,210,950,200,990,200,1000,190,1020,180,1100,175,1130,170,1150,160,1160,150,1200,150,1220,140,1250,130,1275,120,1300,110,1330,105,1360,90,1365,80,1440,80,1470,75,1500,70,1535,70]],
    ['cyan', [650,70,810,70,815,80,825,80,830,60,890,60,900,50,935,45,940,40,975,40,980,30,1005,30,1010,20,1060,20,1070,10,1135,10,1138,-10,1160,-10,1170,-20,1185,-20,1190,-40,1500,-40,1535,-35]],
    ['red', [650,-35,665,-35,670,-25,700,-25,705,0,750,0,755,10,800,10,810,20,880,20,890,40,1040,40,1045,50,1090,50,1100,60,1130,70,1200,70,1210,75,1235,80,1240,90,1270,90,1280,95,1300,100,1380,100,1390,90,1430,90,1440,80,1450,70,1505,70,1510,50,1535,50]],
    ['black', [650,50,680,45,685,40,720,40,725,30,780,30,830,25,860,20,868,0,885,0,900,-10,920,-20,930,-30,960,-35,970,-50,1040,-55,1050,-60,1055,-70,1110,-70,1115,-85,1150,-85,1155,-95,1200,-100,1210,-110,1228,-110]]
  ] };
  S.c11 = { y: [-2000, 7000, 1000], p: [25, 9, 8, 17], zx: [340, 780], grid: 1, ax0: 1, xa: 'rot', n: 55, s: [
    ['blue', [340,4400,360,4300,400,4200,420,4000,450,4000,460,3900,500,3800,530,3700,600,3700,640,3800,665,3900,668,3500,670,4000,690,4400,710,4700,735,4800,745,5500,780,5500]],
    ['gold', [340,5500,345,5700,455,5700,460,5200,500,5200,505,5000,570,5000,575,5200,600,5200,605,5300,680,5300,685,5100,715,5100,720,4800,740,4800,745,4600,780,4600]],
    ['cyan', [340,4600,345,4500,400,4500,405,4300,440,4300,450,4100,490,3700,500,3500,530,3200,540,2900,570,2700,580,2500,605,2300,610,1900,640,1900,645,1800,690,1800,700,1900,770,1900,775,2200]],
    ['red', [340,2100,360,2100,370,2400,385,2800,400,3000,420,3000,430,3300,445,3400,480,3400,490,3600,520,3600,560,3700,565,3900,620,3900,675,3900,680,3600,700,3500,710,3100,720,2800,735,2500,745,2000,760,1800,780,1700]],
    ['black', [340,1700,345,1500,380,1500,460,1500,480,1200,490,1000,500,900,520,900,522,400,550,400,555,0,565,-300,580,-500,595,-700,605,-900,625,-950]]
  ] };
  S.c12 = { y: [-100, 400, 50], f: 'p2', negred: 1, p: [34, 7, 6, 41], zx: [1125, 1555], xa: 'rot', n: 60, amp: 28, s: [
    ['cyan', [1125,50,1140,20,1160,30,1180,20,1200,10,1220,30,1240,60,1260,40,1280,45,1300,30,1320,40,1328,120,1331,210,1336,60,1350,80,1370,120,1385,100,1395,50,1410,70,1420,20,1440,10,1460,30,1480,20,1500,20,1520,40,1535,10,1555,30]],
    ['gold', [1125,20,1160,30,1200,20,1250,0,1300,0,1350,0,1380,40,1400,0,1450,-10,1500,0,1540,10,1555,-20]],
    ['gray', [1125,-20,1140,-10,1160,0,1180,-20,1200,-20,1230,-40,1260,-40,1300,-50,1350,-50,1380,-40,1420,-30,1450,0,1470,40,1480,50,1500,10,1530,-10,1555,-30]],
    ['red', [1125,-30,1140,-40,1160,-30,1200,-30,1250,-20,1300,-30,1350,-20,1400,0,1420,20,1440,40,1455,150,1465,60,1472,250,1475,340,1480,120,1490,80,1510,130,1516,230,1520,270,1528,160,1533,170,1535,0,1555,-40]],
    ['black', [1125,-20,1140,-30,1160,-10,1200,-30,1240,-10,1260,20,1280,0,1300,30,1330,50,1360,80,1380,120,1395,130,1400,100,1408,200]]
  ] };
  S.c13 = { y: [2000, 18000, 2000], p: [27, 26, 7, 12], zx: [685, 1560], grid: 1, xa: 'yr', amp: 700, lw: 2.1,
    yl: [[685, '2022/1/2'], [872, '2023/1/2'], [1062, '2024/1/2'], [1250, '2025/1/2'], [1440, '2026/1/2']], s: [
    ['black', [685,8000,700,9000,720,9500,730,10500,743,12700,760,10500,775,10800,785,8200,800,10200,815,9500,830,9800,840,8500,860,8000,870,7000,890,7000,900,6500,920,6000,940,5500,950,4000,960,4800,980,4800,990,4200,1010,6000,1030,5500,1060,6200,1080,5500,1090,5300,1105,6500,1110,5500,1120,8000,1140,10000,1160,10800,1170,9500,1180,10500,1190,10000,1200,12000,1230,12200,1240,13200,1255,11500,1270,10000,1290,9500,1300,8000,1320,8000,1340,7500,1360,7500,1390,7000,1400,8000,1420,9000,1435,10500,1445,12500,1460,11000,1480,10500,1500,12000,1520,12500,1535,13000,1550,14500,1560,15600]]
  ] };
  S.c14 = { y: [-2000, 4000, 1000], f: 'pc', negred: 1, p: [32, 28, 7, 31], zx: [678, 1530], grid: 1, xa: 'r45', amp: 220, lw: 2.1,
    xl: ['2023/1/2', '2023/4/2', '2023/7/2', '2023/10/2', '2024/1/2', '2024/4/2', '2024/7/2', '2024/10/2', '2025/1/2', '2025/4/2', '2025/7/2', '2025/10/2', '2026/1/2', '2026/4/2', '2026/7/2'], s: [
    ['black', [678,3000,690,3300,700,3300,710,3000,730,3000,740,2600,750,1500,765,1300,770,900,790,1100,810,1200,825,1500,830,2000,845,2200,855,2100,865,1600,880,1500,900,1100,930,900,960,700,990,500,1005,300,1015,-300,1030,-500,1045,-1000,1050,-1400,1060,-700,1075,-900,1090,-600,1110,-800,1140,-500,1160,-600,1170,200,1185,1000,1200,900,1220,1000,1250,1000,1265,1300,1280,1300,1310,1200,1330,700,1340,800,1350,300,1370,100,1390,0,1410,-100,1420,200,1430,1000,1445,900,1460,400,1470,500,1480,100,1495,200,1500,-300,1515,-800,1525,-1200]]
  ] };

  function draw(svg, C, seedBase) {
    var r = svg.getBoundingClientRect(), W = r.width, H = r.height;
    svg.setAttribute('viewBox', '0 0 ' + W + ' ' + H);
    var x0 = C.p[0], x1 = W - C.p[1], y0 = C.p[2], y1 = H - C.p[3];
    var lo = C.y[0], hi = C.y[1], st = C.y[2];
    var zx0 = C.zx[0], zx1 = C.zx[1];
    function Y(v) { return y1 - (v - lo) / (hi - lo) * (y1 - y0); }
    function X(z) { return x0 + (z - zx0) / (zx1 - zx0) * (x1 - x0); }
    var g = el(svg, 'g', {});
    var nt = Math.round((hi - lo) / st), i, m;
    for (i = 0; i <= nt; i++) {
      var v = lo + i * st, yy = Y(v);
      if (C.grid) el(g, 'line', { x1: x0, x2: x1, y1: yy, y2: yy, 'class': 'gl' });
      el(g, 'text', { x: x0 - 4, y: yy + 1.9, 'class': 'yl' + (v < 0 && C.negred ? ' neg' : '') }, fmt(v, C.f));
    }
    var yb = C.ax0 ? Y(0) : y1;
    el(g, 'line', { x1: x0, x2: x1, y1: yb, y2: yb, 'class': 'ax' });
    if (C.unit) el(g, 'text', { x: 0, y: 0, 'class': 'unit', transform: 'translate(' + (x0 - 26) + ',' + ((y0 + y1) / 2) + ') rotate(-90)' }, C.unit);

    if (C.xa === 'rot') {
      for (i = 0; i < C.n; i++) {
        var xx = x0 + (i + 0.5) * (x1 - x0) / C.n;
        var d = new Date(2021, 0, 2 + Math.round(i * 364 / C.n));
        el(g, 'text', { 'class': 'xl', x: 0, y: 0, transform: 'translate(' + (xx + 1.7).toFixed(1) + ',' + (yb + 2.5).toFixed(1) + ') rotate(-90)' }, (d.getMonth() + 1) + '月' + d.getDate() + '日');
      }
    } else if (C.xa === 'two') {
      var mw = (x1 - x0) / 12;
      for (m = 0; m <= 12; m++) el(g, 'line', { x1: x0 + m * mw, x2: x0 + m * mw, y1: yb, y2: yb + C.sep, 'class': 'ax' });
      for (m = 0; m < 12; m++) {
        var xc = x0 + (m + 0.5) * mw;
        el(g, 'text', { x: xc, y: yb + 7, 'class': 'xc' }, C.days[m]);
        el(g, 'text', { x: xc, y: yb + 18, 'class': 'xc' }, (m + 1) + '月');
      }
    } else if (C.xa === 'cat') {
      for (i = 0; i < C.cats.length; i++) el(g, 'text', { x: X(i), y: y1 + 8, 'class': 'xc' }, C.cats[i]);
    } else if (C.xa === 'yr') {
      C.yl.forEach(function (q) { el(g, 'text', { x: X(q[0]), y: y1 + 8, 'class': 'xc' }, q[1]); });
    } else if (C.xa === 'r45') {
      for (i = 0; i < C.xl.length; i++) {
        var xr = C.xz ? X(C.xz[i]) : x0 + (i + 0.5) * (x1 - x0) / C.xl.length;
        el(g, 'text', { 'class': 'xl', x: 0, y: 0, transform: 'translate(' + (xr + 2).toFixed(1) + ',' + (y1 + 4).toFixed(1) + ') rotate(-45)' }, C.xl[i]);
      }
    }

    if (C.bars) {
      var rb = rng(991), kb = C.bars, yz = Y(0);
      var xa = X(kb[0]), xe = X(kb[kb.length - 2]);
      for (var px = xa; px <= xe; px += 1) {
        var z = zx0 + (px - x0) / (x1 - x0) * (zx1 - zx0);
        var base = lerp(kb, z), q = rb();
        var vb = base < 0 ? base * (0.55 + 0.6 * q) : base * (0.2 + 1.0 * q);
        el(g, 'line', { x1: px.toFixed(1), x2: px.toFixed(1), y1: yz, y2: Y(vb).toFixed(1), stroke: vb >= 0 ? '#ff0000' : '#92d050', 'stroke-width': 1.1 });
      }
      var xk = X(1514);
      el(g, 'line', { x1: xk, x2: xk, y1: yz, y2: Y(-4200), stroke: '#2b2b2b', 'stroke-width': 1.6 });
    }

    (C.s || []).forEach(function (sr, k) {
      var kp = sr[1], amp = sr[2] != null ? sr[2] : (C.amp || 0), pts = [], j;
      if (!amp) {
        for (j = 0; j < kp.length; j += 2) pts.push([X(kp[j]), Y(kp[j + 1])]);
      } else {
        var rr = rng(seedBase * 131 + k * 17 + 5), nz = 0, za = kp[0], zb = kp[kp.length - 2];
        var dz = (zx1 - zx0) / (x1 - x0) * 1.4;
        for (var zz = za; zz < zb; zz += dz) {
          nz = nz * 0.55 + (rr() - 0.5) * amp;
          pts.push([X(zz), Y(lerp(kp, zz) + nz)]);
        }
        pts.push([X(zb), Y(kp[kp.length - 1])]);
      }
      el(g, 'polyline', {
        points: pts.map(function (p) { return p[0].toFixed(1) + ',' + p[1].toFixed(1); }).join(' '),
        fill: 'none', stroke: COL[sr[0]], 'stroke-width': C.lw || 1.3, 'stroke-linejoin': 'round'
      });
      if (C.mk) pts.forEach(function (p) { el(g, 'circle', { cx: p[0], cy: p[1], r: 1.7, fill: COL[sr[3]] }); });
    });
  }

  var charts = document.querySelectorAll('.chart[data-c]');
  for (var i = 0; i < charts.length; i++) {
    var key = charts[i].getAttribute('data-c');
    draw(charts[i].querySelector('svg'), S[key], i + 3);
  }
})();
```
